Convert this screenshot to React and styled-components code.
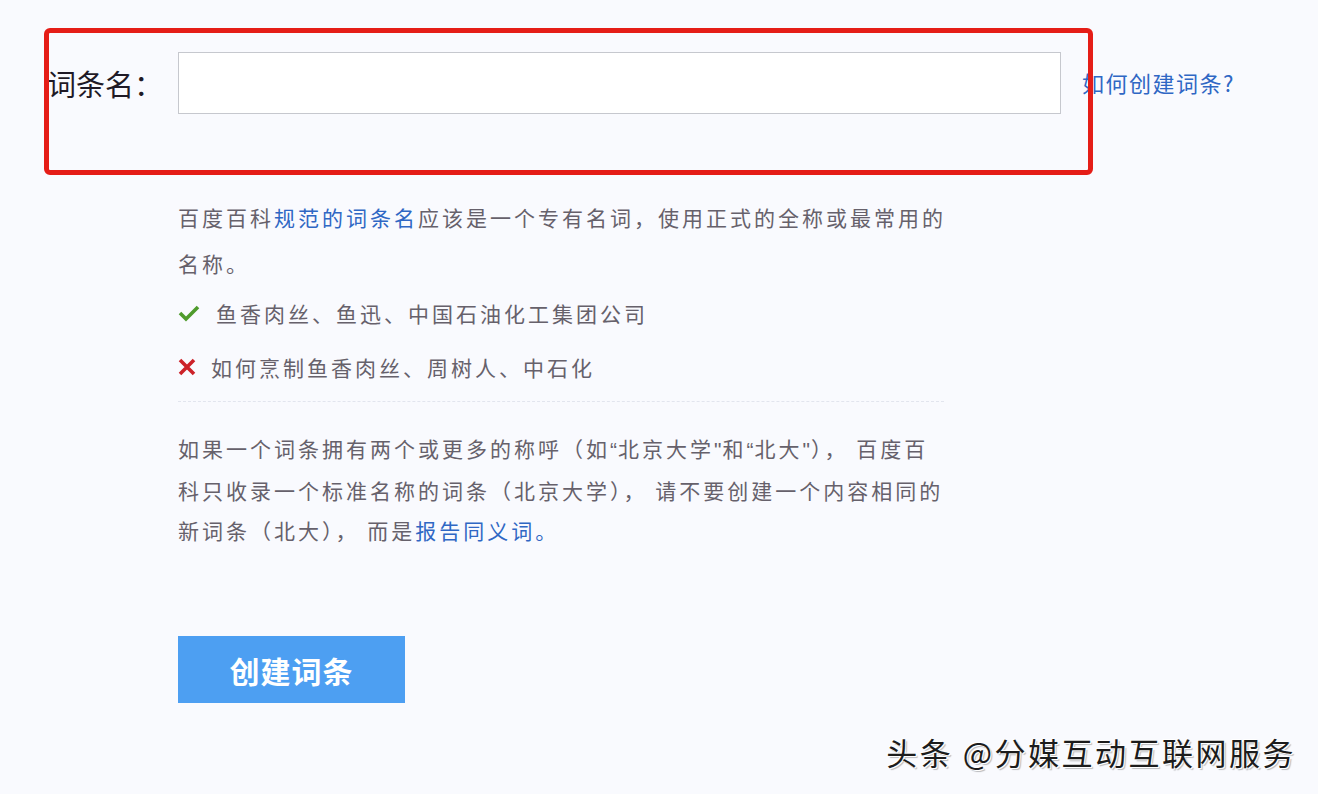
import React from 'react';
import styled, { createGlobalStyle } from 'styled-components';

const GlobalStyle = createGlobalStyle`
    html, body {
        margin: 0;
        padding: 0;
        background: #f9fafe;
    }
    body {
        font-family: "Noto Sans CJK SC", "Noto Sans", sans-serif;
    }
`;

const Page = styled.div`
    position: relative;
    width: 1318px;
    height: 794px;
    overflow: hidden;
    background: #f9fafe;
    padding-top: 52px;
    box-sizing: border-box;
`;

const NameRow = styled.div`
    position: relative;
    display: flex;
    align-items: center;
    padding-left: 47px;
    height: 62px;
`;

const Label = styled.div`
    width: 131px;
    font-size: 29px;
    color: #1f1a26;
    line-height: 1;
`;

const NameInput = styled.input`
    width: 883px;
    height: 62px;
    box-sizing: border-box;
    border: 1px solid #c6c8ce;
    background: #fff;
    outline: none;
    padding: 0 12px;
    font-size: 20px;
`;

const HelpLink = styled.a`
    margin-left: 21px;
    font-size: 22px;
    letter-spacing: 1.5px;
    color: #2f67c4;
    text-decoration: none;
    margin-top: -2px;
`;

const RedMark = styled.div`
    position: absolute;
    left: 44px;
    top: -24px;
    width: 1049px;
    height: 147px;
    box-sizing: border-box;
    border: 5px solid #e51d17;
    border-radius: 6px;
    pointer-events: none;
`;

const Guide = styled.div`
    padding-left: 178px;
    margin-top: 80px;
    color: #66616b;
    font-size: 21px;
    letter-spacing: 3px;
`;

const Para = styled.p`
    margin: 0;
    line-height: ${(p) => p.$lh}px;
`;

const Blue = styled.span`
    color: #2f67c4;
`;

const Quote = styled.span`
    font-family: "Liberation Sans", sans-serif;
    letter-spacing: 1px;
`;

const Example = styled.div`
    display: flex;
    align-items: center;
    height: 54px;
    gap: ${(p) => p.$gap}px;
`;

const Divider = styled.div`
    width: 766px;
    margin-top: 7px;
    margin-bottom: 26px;
    border-top: 1px dashed #e2e5ee;
`;

const CreateButton = styled.button`
    margin-top: 86px;
    width: 227px;
    height: 67px;
    border: none;
    background: #4d9ff2;
    color: #fff;
    font-family: "Noto Sans CJK SC", sans-serif;
    font-size: 30px;
    font-weight: bold;
    letter-spacing: 1px;
    cursor: pointer;
`;

const Watermark = styled.div`
    position: absolute;
    right: 22px;
    top: 732px;
    font-size: 31px;
    line-height: 40px;
    letter-spacing: 2.5px;
    color: #1c1c1c;
    text-shadow: 1px 1px 0 #fff, -1px -1px 0 #fff, 2px 2px 1px rgba(0, 0, 0, 0.25);
`;

const CheckIcon = () => (
    <svg width="22" height="18" viewBox="0 0 22 18">
        <polyline points="2,9 8,15 20,3" fill="none" stroke="#4f9b2c" strokeWidth="3.6" />
    </svg>
);

const CrossIcon = () => (
    <svg width="18" height="18" viewBox="0 0 18 18">
        <path d="M2 2 L16 16 M16 2 L2 16" stroke="#cc2229" strokeWidth="3.6" />
    </svg>
);

const App = () => {
    return (
        <Page>
            <GlobalStyle />
            <NameRow>
                <Label>词条名：</Label>
                <NameInput type="text" />
                <HelpLink href="#">如何创建词条?</HelpLink>
                <RedMark />
            </NameRow>
            <Guide>
                <Para $lh={46}>
                    百度百科<Blue>规范的词条名</Blue>应该是一个专有名词，使用正式的全称或最常用的
                    <br />
                    名称。
                </Para>
                <Example $gap={16}>
                    <CheckIcon />
                    <span>鱼香肉丝、鱼迅、中国石油化工集团公司</span>
                </Example>
                <Example $gap={15}>
                    <CrossIcon />
                    <span>如何烹制鱼香肉丝、周树人、中石化</span>
                </Example>
                <Divider />
                <Para $lh={40}>
                    如果一个词条拥有两个或更多的称呼（如<Quote>“</Quote>北京大学<Quote>"</Quote>和
                    <Quote>“</Quote>北大<Quote>"</Quote>）， 百度百
                    <br />
                    科只收录一个标准名称的词条（北京大学）， 请不要创建一个内容相同的
                    <br />
                    新词条（北大）， 而是<Blue>报告同义词。</Blue>
                </Para>
                <CreateButton>创建词条</CreateButton>
            </Guide>
            <Watermark>头条 @分媒互动互联网服务</Watermark>
        </Page>
    );
};

export default App;
